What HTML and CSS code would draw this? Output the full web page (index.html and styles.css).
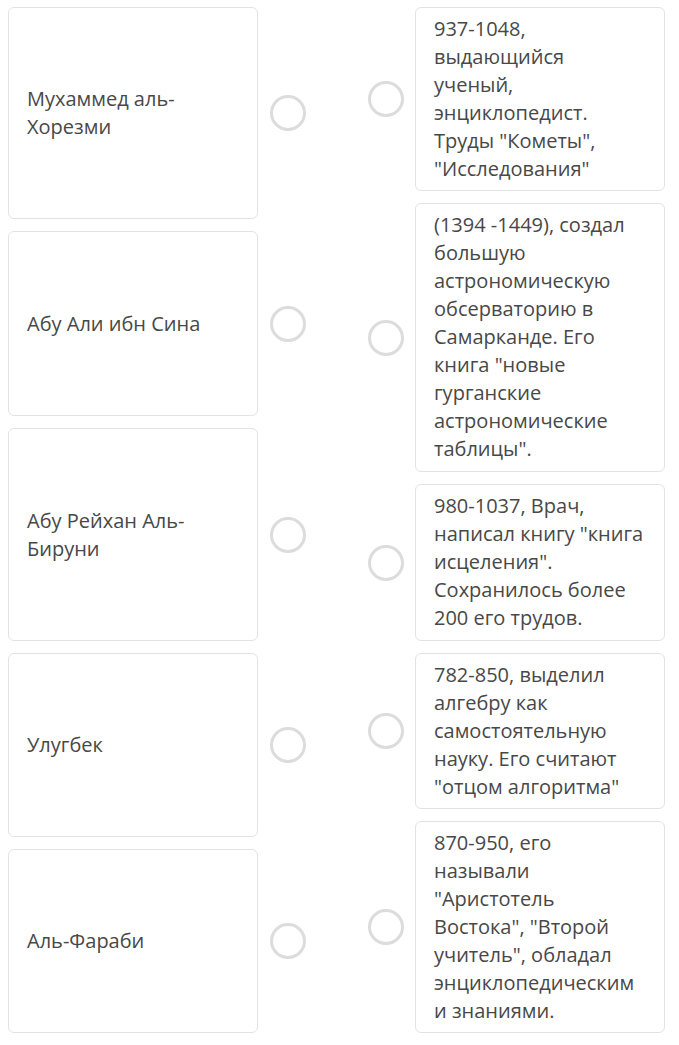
FILE: index.html
```html
<!DOCTYPE html>
<html lang="ru">
<head>
    <meta charset="UTF-8">
    <meta name="viewport" content="width=device-width, initial-scale=1.0">
    <title>Установите соответствие</title>
    <link rel="stylesheet" href="styles.css">
</head>
<body>
    <div class="board">
        <div class="col col-left">
            <div class="item">
                <div class="card">Мухаммед аль-Хорезми</div>
                <span class="dot"></span>
            </div>
            <div class="item">
                <div class="card">Абу Али ибн Сина</div>
                <span class="dot"></span>
            </div>
            <div class="item">
                <div class="card">Абу Рейхан Аль-Бируни</div>
                <span class="dot"></span>
            </div>
            <div class="item">
                <div class="card">Улугбек</div>
                <span class="dot"></span>
            </div>
            <div class="item">
                <div class="card">Аль-Фараби</div>
                <span class="dot"></span>
            </div>
        </div>
        <div class="col col-right">
            <div class="item">
                <span class="dot"></span>
                <div class="card">937-1048, выдающийся ученый, энциклопедист. Труды "Кометы", "Исследования"</div>
            </div>
            <div class="item">
                <span class="dot"></span>
                <div class="card">(1394 -1449), создал большую астрономическую обсерваторию в Самарканде. Его книга "новые гурганские астрономические таблицы".</div>
            </div>
            <div class="item">
                <span class="dot"></span>
                <div class="card">980-1037, Врач, написал книгу "книга исцеления". Сохранилось более 200 его трудов.</div>
            </div>
            <div class="item">
                <span class="dot"></span>
                <div class="card">782-850, выделил алгебру как самостоятельную науку. Его считают "отцом алгоритма"</div>
            </div>
            <div class="item">
                <span class="dot"></span>
                <div class="card">870-950, его называли "Аристотель Востока", "Второй учитель", обладал энциклопедическим и знаниями.</div>
            </div>
        </div>
    </div>
</body>
</html>
```

FILE: styles.css
```css
body {
    margin: 0;
    background-color: #fff;
    color: #484848;
    font-family: "Open Sans", "Noto Sans", sans-serif;
    font-size: 20px;
    line-height: 28px;
    overflow: hidden;
}
.board {
    display: flex;
    gap: 62px;
    padding: 7px 0 0 8px;
}
.col {
    display: flex;
    flex-direction: column;
    gap: 12px;
}
.item {
    display: flex;
    align-items: center;
}
.col-left .item {
    gap: 12px;
}
.col-right .item {
    gap: 11px;
}
.card {
    box-sizing: border-box;
    width: 250px;
    border: 1px solid #e1e3e4;
    border-radius: 6px;
    background-color: #fff;
    padding: 7px 18px;
}
.col-left .card {
    display: flex;
    align-items: center;
}
.col-left .item:nth-child(1) .card { height: 212px; }
.col-left .item:nth-child(2) .card { height: 185px; }
.col-left .item:nth-child(3) .card { height: 213px; }
.col-left .item:nth-child(4) .card { height: 184px; }
.col-left .item:nth-child(5) .card { height: 184px; }
.col-right .item:nth-child(1) .card { height: 184px; }
.col-right .item:nth-child(2) .card { height: 269px; }
.col-right .item:nth-child(3) .card { height: 157px; }
.col-right .item:nth-child(4) .card { height: 156px; }
.col-right .item:nth-child(5) .card { height: 212px; }
.dot {
    box-sizing: border-box;
    flex: none;
    width: 36px;
    height: 36px;
    border: 3px solid #dcdcdc;
    border-radius: 50%;
}
```
